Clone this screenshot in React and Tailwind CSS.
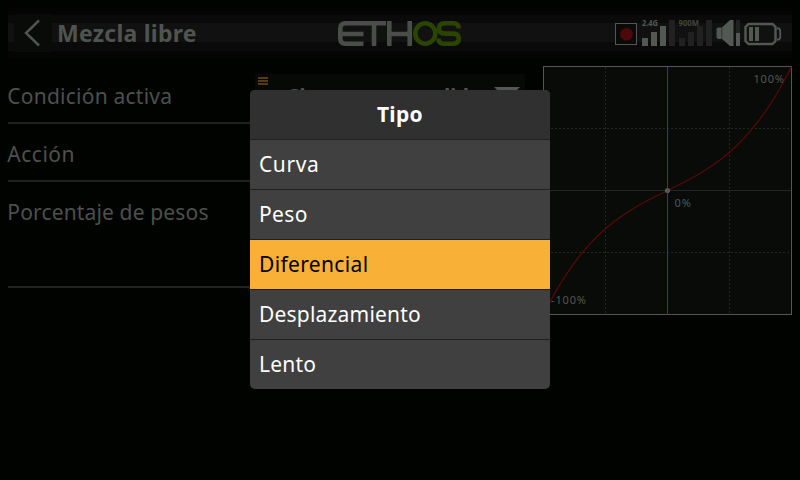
const FONT = "font-['Noto_Sans','Open_Sans',sans-serif]";

function Logo() {
  return (
    <svg width="124" height="28" viewBox="338 20 124 28" fill="none" strokeWidth="4.6">
      <g stroke="#4b4d4b">
        <path d="M386 23.200H345.500Q340.300 23.200 340.300 28.500V38.500Q340.300 43.700 345.500 43.700H363.500M340.300 34H363.500" />
        <path d="M374 23V46M389.300 21V46M409.700 21V46M389 34H410" />
      </g>
      <g stroke="#2b4500">
        <ellipse cx="425.300" cy="33.500" rx="10" ry="10.200" />
        <path d="M458.800 28.500Q458.800 23.200 453 23.200H445Q439 23.200 439 28.500Q439 33.600 445 33.600H453Q458.800 33.600 458.800 38.600Q458.800 43.700 453 43.700H444Q438.500 43.700 438.500 38.500" />
      </g>
    </svg>
  );
}

function StatusIcons() {
  return (
    <svg width="168" height="32" viewBox="614 18 168 32" fill="#545854">
      <rect x="615.5" y="23.5" width="21" height="21" fill="#080b08" stroke="#545654" />
      <circle cx="626.5" cy="34.3" r="6.4" fill="#4f0808" />
      <path d="M642 38h6v8h-6zM651 32h6v14h-6zM660 26h6v20h-6z" />
      <path d="M669 20h6v26h-6zM679 38h6v8h-6zM688 32h6v14h-6zM697 26h6v20h-6zM706 20h6v26h-6zM736 20h4v13h-4z" fill="#202120" />
      <g className="font-['Noto_Sans',sans-serif] font-bold" fontSize="8.5">
        <text x="642" y="26" textLength="16" lengthAdjust="spacingAndGlyphs">2.4G</text>
        <text x="678.5" y="26" textLength="20.5" lengthAdjust="spacingAndGlyphs" fill="#424542">900M</text>
      </g>
      <path d="M716.500 28.500L718 27.500H722L730 20H733.500V46H730L722 39H718L716.500 37.500Z" />
      <path d="M721.800 28V39" stroke="#303330" fill="none" />
      <path d="M736 33h4v13h-4zM749 27h4v14h-4zM755 27h4v14h-4z" />
      <path d="M748.500 24H772.500L775.500 27V41L772.500 44H748.500L745.500 41V27Z" fill="none" stroke="#545854" strokeWidth="2.400" />
      <path d="M777 28.500H779L780.200 30V38L779 39.500H777" fill="none" stroke="#545854" strokeWidth="1.800" />
    </svg>
  );
}

function Header() {
  return (
    <header className="mx-2 flex h-[60px] items-start bg-[linear-gradient(to_bottom,transparent_0_8px,#030403_8px_15px,#090a09_15px_23px,#101110_23px_42px,#090a09_42px_51px,#030403_51px_58px,transparent_58px)]">
      <div className="ml-1.5 mt-3.5 flex h-[38px] w-[38px] items-center justify-center bg-[#080b08]">
        <svg width="38" height="38" viewBox="14 14 38 38" fill="none" stroke="#505450" strokeWidth="2.500">
          <path d="M39 20.500L26 33L39 45.500" />
        </svg>
      </div>
      <h1 className="ml-[5px] mt-[15px] w-[281px] whitespace-nowrap text-[23px] font-bold leading-9 tracking-[0.25px] text-[#505450]">Mezcla libre</h1>
      <div className="mt-5"><Logo /></div>
      <div className="ml-[152px] mt-[18px]"><StatusIcons /></div>
    </header>
  );
}

const CURVE = Array.from({ length: 63 }, (_, i) => {
  const t = (i - 31) / 31;
  return `${124.5 + t * 124},${124.5 - (0.51 * t ** 3 + 0.49 * t) * 124}`;
}).join(" ");

function Chart() {
  return (
    <svg width="249" height="249" viewBox="0 0 249 249" fill="none" className="shrink-0">
      <rect x="0.5" y="0.5" width="248" height="248" fill="#080b08" stroke="#545654" />
      <path d="M62.500 1V248M186.500 1V248M0 62.500H248M0 186.500H248" stroke="#242624" strokeDasharray="2 2" />
      <path d="M1 124.500H248" stroke="#242624" />
      <path d="M124.500 1V249" stroke="#553a12" />
      <polyline points={CURVE} stroke="#5c0808" strokeWidth="1.200" />
      <circle cx="124.5" cy="124.5" r="2.6" fill="#545854" />
      <g className="font-['Noto_Sans',sans-serif]" fontSize="11" fill="#545654">
        <text x="210.500" y="17" textLength="30.500">100%</text>
        <text x="131.500" y="141" textLength="16.500">0%</text>
        <text x="8" y="238" textLength="35">-100%</text>
      </g>
    </svg>
  );
}

function Row({ label, className }) {
  return (
    <div className={`${className} border-b-2 border-[#202120] text-[21px] leading-[30px] text-[#4d504d]`}>
      <span className="-ml-[0.7px]">{label}</span>
    </div>
  );
}

const OPTIONS = [
  { label: "Curva", className: "tracking-[0.6px]" },
  { label: "Peso", className: "tracking-[0.35px]" },
  { label: "Diferencial", className: "bg-[#f9b037] text-black tracking-[0.35px]" },
  { label: "Desplazamiento", className: "tracking-[0.2px]" },
  { label: "Lento", className: "tracking-[0.2px]" },
];

function TypeDialog() {
  return (
    <div role="dialog" className="absolute left-[250px] top-[90px] w-[300px] overflow-hidden rounded-[5px] bg-[#404040] text-[21px] text-white">
      <h2 className="h-[49px] bg-[#303030] text-center text-[21px] font-bold leading-[48px] tracking-[0.35px]">Tipo</h2>
      {OPTIONS.map((o) => (
        <div key={o.label} className={`h-[50px] border-t border-[#202020] pl-[9px] leading-[49px] ${o.className}`}>
          {o.label}
        </div>
      ))}
    </div>
  );
}

export default function App() {
  return (
    <div className={`relative h-[480px] w-[800px] overflow-hidden bg-[#000300] ${FONT}`}>
      <Header />
      <main className="flex items-start pl-2 pt-1.5">
        <section className="mr-[5px] w-[242px] whitespace-nowrap">
          <Row label="Condición activa" className="h-[58px] pt-[15px] tracking-[0.23px]" />
          <Row label="Acción" className="h-[58px] pt-[15px] tracking-[0.5px]" />
          <Row label="Porcentaje de pesos" className="h-[106px] pt-[15px] tracking-[0.15px]" />
        </section>
        <div className="mr-[18px] mt-2 flex h-[44px] w-[270px] bg-[#060906]">
          <div className="ml-[3px] mt-[3px] flex w-2.5 flex-col gap-px">
            <i className="h-0.5 bg-[#553a12]" />
            <i className="h-0.5 bg-[#553a12]" />
            <i className="h-0.5 bg-[#553a12]" />
          </div>
          <span className="ml-5 mt-1 w-[206px] shrink-0 whitespace-nowrap text-[21px] font-bold leading-[36px] tracking-[-0.4px] text-[#505450]">Siempre encendido</span>
          <svg width="26" height="13" viewBox="0 0 26 13" className="mt-[13px] shrink-0"><path d="M0 0H26L13 13Z" fill="#545854" /></svg>
        </div>
        <Chart />
      </main>
      <TypeDialog />
    </div>
  );
}
